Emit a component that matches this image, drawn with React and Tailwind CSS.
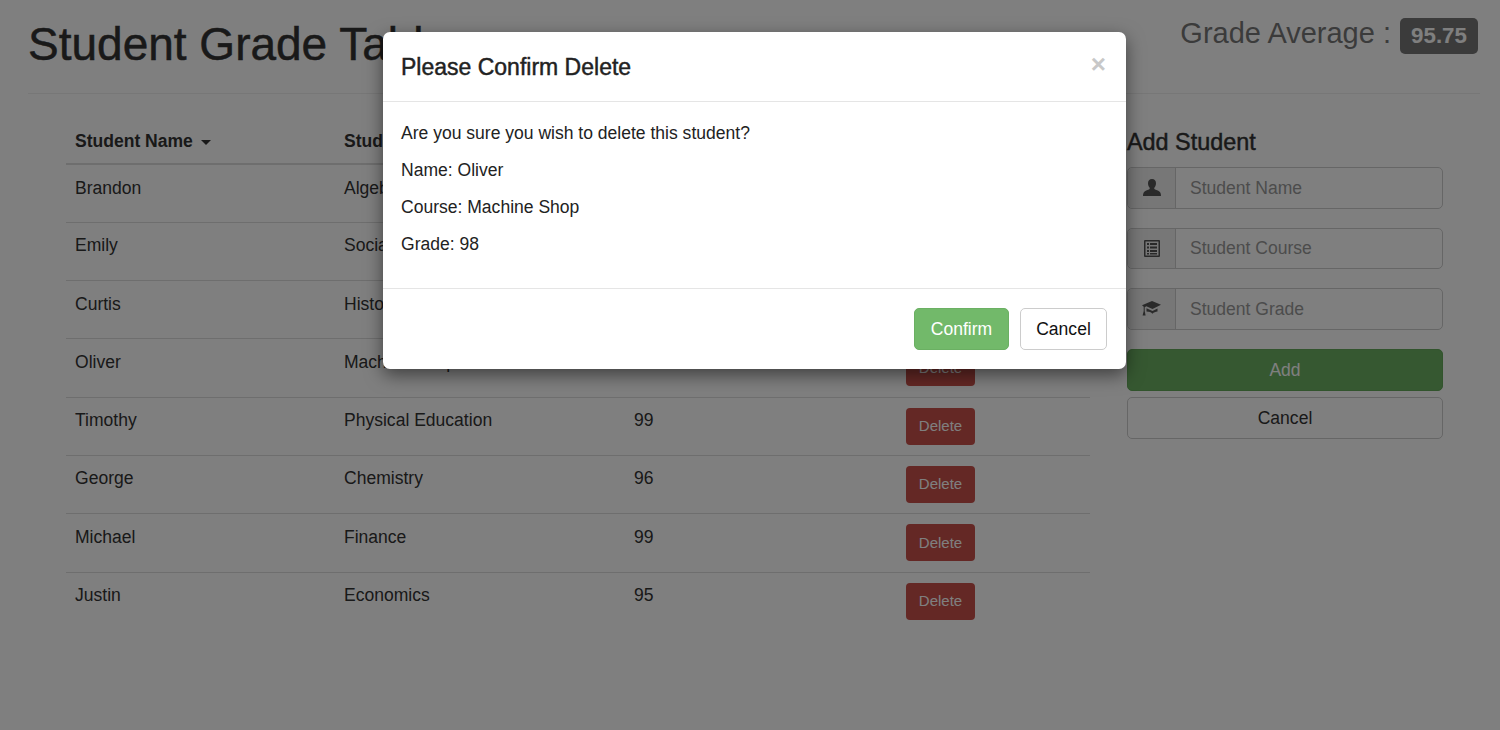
const students = [
  { name: 'Brandon', course: 'Algebra', grade: 91 },
  { name: 'Emily', course: 'Social Studies', grade: 94 },
  { name: 'Curtis', course: 'History', grade: 94 },
  { name: 'Oliver', course: 'Machine Shop', grade: 98 },
  { name: 'Timothy', course: 'Physical Education', grade: 99 },
  { name: 'George', course: 'Chemistry', grade: 96 },
  { name: 'Michael', course: 'Finance', grade: 99 },
  { name: 'Justin', course: 'Economics', grade: 95 },
]

const UserIcon = () => (
  <svg width="18" height="17" viewBox="0 0 18 17" fill="#555">
    <path d="M9 0c2.6 0 4 1.900 4 4.300 0 1.800-.7 3.300-1.500 4.300-.4.500-.4 1.300.2 1.700.8.500 4.100 1.500 5.200 2.600.8.800 1.100 2.400 1.100 4.100H0c0-1.700.3-3.300 1.100-4.100 1.100-1.100 4.400-2.100 5.200-2.600.6-.4.600-1.200.2-1.700C5.700 7.600 5 6.100 5 4.300 5 1.900 6.400 0 9 0z" />
  </svg>
)

const ListIcon = () => (
  <svg width="16" height="17" viewBox="0 0 16 17" fill="#555">
    <path fillRule="evenodd" d="M1 0h14a1 1 0 0 1 1 1v15a1 1 0 0 1-1 1H1a1 1 0 0 1-1-1V1a1 1 0 0 1 1-1zm.5 1.500v14h13v-14h-13z" />
    <path d="M3 3h2v2H3zM6 3h7v2H6zM3 6.500h2v2H3zM6 6.500h7v2H6zM3 10h2v2H3zM6 10h7v2H6zM3 13h2v1.500H3zM6 13h7v1.500H6z" />
  </svg>
)

const CapIcon = () => (
  <svg width="19" height="17" viewBox="0 0 19 17" fill="#555">
    <path d="M10 1 19 4.800 10.500 9 4.300 6.300 2.700 7.300v3.600l.9 4.600H.6l1.100-4.600V6.700L0 5.300z" />
    <path d="M4.500 8.200l6 2.700 5-2.500v3.200c-2 .1-3.800 1-5 2.200-1.300-1.500-3.300-2.300-6-2.300z" />
  </svg>
)

const Field = ({ icon, placeholder }) => (
  <div className="flex h-[41.5px] rounded-[5px] border border-[#ccc] bg-white">
    <span className="flex w-[48px] shrink-0 items-center justify-center rounded-l-[5px] border-r border-[#ccc] bg-[#eee]">{icon}</span>
    <input className="min-w-0 flex-1 bg-transparent px-[14px] text-[17.55px] outline-none placeholder:text-[#999]" placeholder={placeholder} readOnly />
  </div>
)

export default function App() {
  return (
    <div className="relative h-[730px] w-[1500px] overflow-hidden bg-white text-[17.55px] text-[#333] [font-family:'Liberation_Sans',Arial,sans-serif]">
      <div className="pl-[28px] pr-[20px]">
        <header className="flex h-[94px] items-start justify-between border-b border-[#eee] pr-[2px]">
          <h1 className="mt-[16px] text-[46px] leading-[56px] [-webkit-text-stroke:0.5px_#333]">Student Grade Table</h1>
          <div className="mt-[15px] flex items-start gap-[9px] text-[29px] leading-[36px] text-[#777]">
            <span>Grade Average :</span>
            <span className="mt-[3px] flex h-[36px] w-[78px] items-center justify-center rounded-[5px] bg-[#777] text-[22.3px] font-bold text-white">95.75</span>
          </div>
        </header>

        <div className="flex pl-[38px] pt-[28px]">
          <table className="w-[1024px] shrink-0 table-fixed border-collapse">
            <thead>
              <tr className="h-[42px] border-b-[2px] border-[#ddd] text-left">
                <th className="w-[269px] px-[9px] pb-[3px] font-bold">
                  Student Name
                  <span className="ml-[8px] inline-block border-x-[5px] border-t-[5px] border-x-transparent border-t-[#333] align-middle" />
                </th>
                <th className="w-[290px] px-[9px] pb-[3px] font-bold">Student Course</th>
                <th className="w-[272px] px-[9px] pb-[3px] font-bold">Student Grade</th>
                <th className="px-[9px] pb-[3px] font-bold">Operations</th>
              </tr>
            </thead>
            <tbody>
              {students.map((s, i) => (
                <tr key={s.name} className={`h-[58.3px] align-top ${i > 0 ? 'border-t border-[#ddd]' : ''}`}>
                  <td className="px-[9px] pt-[11.5px] leading-[22px]">{s.name}</td>
                  <td className="px-[9px] pt-[11.5px] leading-[22px]">{s.course}</td>
                  <td className="px-[9px] pt-[11.5px] leading-[22px]">{s.grade}</td>
                  <td className="px-[9px] pt-[10px]">
                    <button className="h-[37px] w-[69px] rounded-[4px] bg-[#c8504a] text-[15px] text-white">Delete</button>
                  </td>
                </tr>
              ))}
            </tbody>
          </table>

          <aside className="ml-[37px] w-[316px] shrink-0">
            <h4 className="mt-[6px] text-[23.4px] font-medium leading-[28px] [-webkit-text-stroke:0.45px_#333]">Add Student</h4>
            <div className="mt-[11px] flex flex-col gap-[19px]">
              <Field icon={<UserIcon />} placeholder="Student Name" />
              <Field icon={<ListIcon />} placeholder="Student Course" />
              <Field icon={<CapIcon />} placeholder="Student Grade" />
            </div>
            <button className="mt-[19.5px] h-[42px] w-full rounded-[5px] border border-[#64a85b] bg-[#6cb062] text-white">Add</button>
            <button className="mt-[6px] h-[42px] w-full rounded-[5px] border border-[#ccc] bg-white">Cancel</button>
          </aside>
        </div>
      </div>

      {/* backdrop + modal */}
      <div className="absolute inset-0 bg-[rgba(0,0,0,0.5)]">
        <div className="absolute left-[383px] top-[32px] w-[743px] rounded-[7px] bg-white text-[#222] shadow-[0_6px_18px_rgba(0,0,0,0.5)]">
          <div className="flex h-[70px] items-center justify-between border-b border-[#e5e5e5] pl-[18px] pr-[20px]">
            <h4 className="mt-[1px] text-[23px] font-medium [-webkit-text-stroke:0.45px_#222]">Please Confirm Delete</h4>
            <span className="mb-[6px] text-[26px] font-bold leading-none text-[#c8c8c8]">×</span>
          </div>
          <div className="flex h-[187px] flex-col gap-[12px] border-b border-[#e5e5e5] px-[18px] pt-[19px] leading-[25px]">
            <p>Are you sure you wish to delete this student?</p>
            <p>Name: Oliver</p>
            <p>Course: Machine Shop</p>
            <p>Grade: 98</p>
          </div>
          <div className="flex h-[80px] items-start justify-end gap-[11px] pr-[19px] pt-[19px]">
            <button className="h-[42px] w-[95px] rounded-[5px] border border-[#6bb063] bg-[#72b96a] text-white">Confirm</button>
            <button className="h-[42px] w-[87px] rounded-[5px] border border-[#ccc] bg-white text-[#111]">Cancel</button>
          </div>
        </div>
      </div>
    </div>
  )
}
